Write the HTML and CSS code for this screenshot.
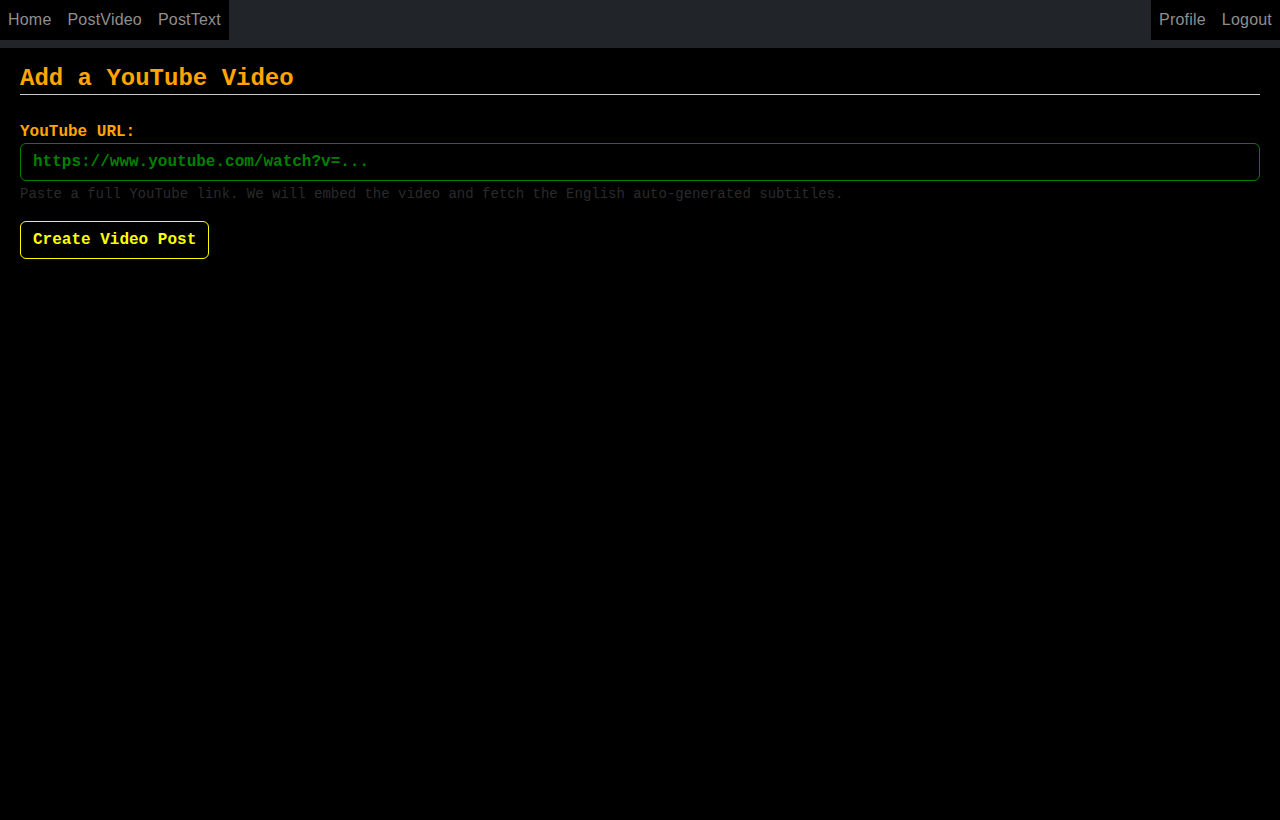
FILE: index.html
```html
<!DOCTYPE html>
<html lang="en">

<head>
    <meta charset="UTF-8">
    <meta name="viewport" content="width=device-width, initial-scale=1.0">
    <title>Post Video</title>
    <link rel="stylesheet" href="styles.css">
</head>

<body>
    <!-- Top navigation -->
    <nav class="topbar">
        <div class="nav-group">
            <a href="#" class="nav-link">Home</a>
            <a href="#" class="nav-link">PostVideo</a>
            <a href="#" class="nav-link">PostText</a>
        </div>
        <div class="nav-group">
            <a href="#" class="nav-link">Profile</a>
            <a href="#" class="nav-link">Logout</a>
        </div>
    </nav>

    <main class="content">
        <h2 class="page-title">Add a YouTube Video</h2>

        <form id="video-form">
            <label for="url" class="field-label">YouTube URL:</label>
            <input type="text" id="url" class="input-field" placeholder="https://www.youtube.com/watch?v=...">
            <p class="help-text">Paste a full YouTube link. We will embed the video and fetch the English auto-generated subtitles.</p>
            <button type="submit" class="btn">Create Video Post</button>
        </form>
    </main>
</body>

</html>
```

FILE: styles.css
```css
/* Colours */
:root {
    --bar-color: #212529;
    --nav-text: #8f8f8f;
    --accent: #ffa500;
    --green: #008000;
    --yellow: #ffff00;
    --muted: #2b2b2b;
    --radius: 6px;
}

body {
    margin: 0;
    background-color: #000;
    font-family: "Liberation Mono", "Courier New", monospace;
}

/* Navigation bar */
.topbar {
    display: flex;
    justify-content: space-between;
    background-color: var(--bar-color);
    padding-bottom: 8px;
}

.nav-group {
    display: flex;
    background-color: #000;
    height: 40px;
}

.nav-link {
    display: flex;
    align-items: center;
    padding: 0 8px;
    font-family: "Liberation Sans", Arial, sans-serif;
    font-size: 16px;
    letter-spacing: 0.2px;
    color: var(--nav-text);
    text-decoration: none;
}

/* Page content */
.content {
    padding: 16px 20px;
}

.page-title {
    margin: 0 0 28px;
    padding-bottom: 0;
    border-bottom: 1px solid #ccc;
    color: var(--accent);
    font-size: 24px;
    line-height: 30px;
    font-weight: bold;
}

.field-label {
    display: block;
    margin-bottom: 2px;
    color: var(--accent);
    font-size: 16px;
    line-height: 18px;
    font-weight: bold;
}

.input-field {
    display: block;
    box-sizing: border-box;
    width: 100%;
    height: 38px;
    padding: 0 12px;
    background-color: #000;
    border: 1px solid var(--green);
    border-radius: var(--radius);
    color: var(--green);
    font-family: inherit;
    font-size: 16px;
    font-weight: bold;
}

.input-field::placeholder {
    color: var(--green);
    opacity: 1;
}

.help-text {
    margin: 5px 0 19px;
    color: var(--muted);
    font-size: 14px;
    line-height: 16px;
}

.btn {
    height: 38px;
    padding: 0 12px;
    background-color: #000;
    border: 1px solid var(--yellow);
    border-radius: var(--radius);
    color: var(--yellow);
    font-family: inherit;
    font-size: 16px;
    font-weight: bold;
    cursor: pointer;
}
```
